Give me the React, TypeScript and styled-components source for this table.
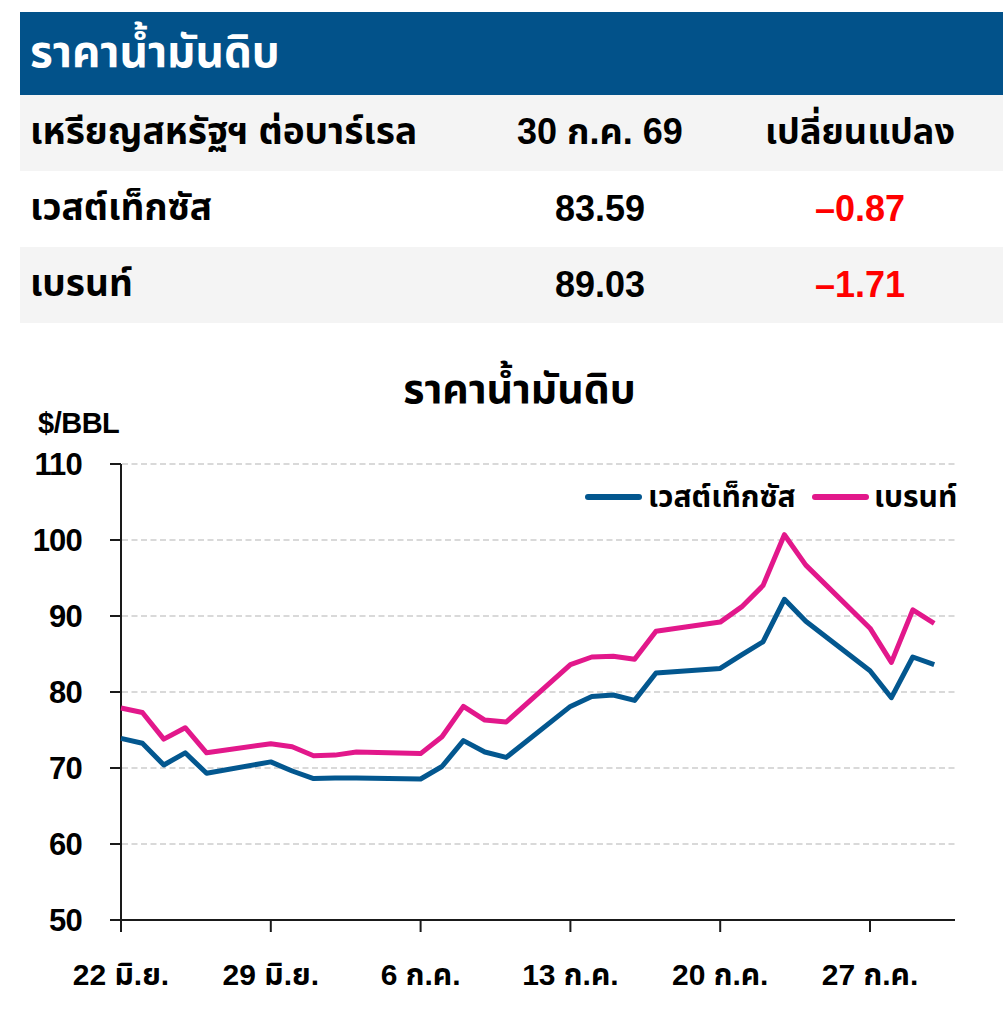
import styled, { createGlobalStyle } from "styled-components";

const GlobalStyle = createGlobalStyle`
  * { box-sizing: border-box; }
  body {
    margin: 0;
    background: #ffffff;
    font-family: "Liberation Sans", "Noto Sans Thai", "Noto Sans", sans-serif;
    color: #000000;
  }
`;

const Page = styled.main`
  width: 1003px;
  padding-top: 12px;
`;

const Table = styled.section`
  margin-left: 20px;
`;

const TitleBar = styled.h1`
  margin: 0;
  height: 83px;
  padding-left: 10px;
  display: flex;
  align-items: center;
  background: #02528a;
  color: #ffffff;
  font-size: 44px;
  font-weight: 700;
`;

const Row = styled.div<{ $shaded?: boolean }>`
  height: 76px;
  display: grid;
  grid-template-columns: 450px 260px 260px 1fr;
  align-items: center;
  background: ${(p) => (p.$shaded ? "#f4f4f4" : "#ffffff")};
  font-size: 36px;
  font-weight: 700;
`;

const Label = styled.div`
  padding-left: 10px;
  white-space: nowrap;
  font-size: 37px;
`;

const Cell = styled.div<{ $negative?: boolean }>`
  text-align: center;
  white-space: nowrap;
  color: ${(p) => (p.$negative ? "#ff0000" : "#000000")};
`;

const ChartSection = styled.section`
  margin-top: 35px;
`;

const ChartTitle = styled.h2`
  margin: 0;
  padding: 14px 0 0 36px;
  text-align: center;
  font-size: 41px;
  line-height: 34px;
  font-weight: 700;
`;

const Unit = styled.div`
  padding-left: 38px;
  font-size: 29px;
  line-height: 35px;
  font-weight: 700;
  letter-spacing: -0.5px;
`;

const Plot = styled.svg`
  display: block;
  margin-top: 4px;
  font-family: "Liberation Sans", "Noto Sans Thai", "Noto Sans", sans-serif;
  font-weight: 700;
`;

type Point = [number, number];

const wti: Point[] = [
  [0, 73.9], [1, 73.25], [2, 70.4], [3, 72.0], [4, 69.3], [7, 70.8], [8, 69.6],
  [9, 68.6], [10, 68.7], [11, 68.7], [14, 68.55], [15, 70.2], [16, 73.6], [17, 72.1],
  [18, 71.4], [21, 78.1], [22, 79.4], [23, 79.6], [24, 78.9], [25, 82.5], [28, 83.1],
  [29, 84.9], [30, 86.6], [31, 92.2], [32, 89.3], [35, 82.8], [36, 79.25], [37, 84.6],
  [38, 83.59],
];

const brent: Point[] = [
  [0, 77.9], [1, 77.3], [2, 73.8], [3, 75.3], [4, 72.0], [7, 73.2], [8, 72.8],
  [9, 71.6], [10, 71.7], [11, 72.1], [14, 71.9], [15, 74.1], [16, 78.1], [17, 76.3],
  [18, 76.05], [21, 83.6], [22, 84.6], [23, 84.7], [24, 84.3], [25, 88.0], [28, 89.2],
  [29, 91.2], [30, 94.0], [31, 100.7], [32, 96.7], [35, 88.4], [36, 83.9], [37, 90.8],
  [38, 89.03],
];

const X0 = 121;
const DAY = 149.8 / 7;
const xOf = (d: number) => X0 + d * DAY;
const yOf = (v: number) => 920 - (v - 50) * 7.6;
const toPath = (pts: Point[]) =>
  pts.map(([d, v], i) => `${i ? "L" : "M"}${xOf(d).toFixed(1)} ${yOf(v).toFixed(1)}`).join(" ");

const yTicks = [110, 100, 90, 80, 70, 60, 50];
const xTicks = ["22 มิ.ย.", "29 มิ.ย.", "6 ก.ค.", "13 ก.ค.", "20 ก.ค.", "27 ก.ค."];

const BLUE = "#03578f";
const PINK = "#e2188b";

const PriceChart = () => (
  <Plot width={1003} height={587} viewBox="0 445 1003 587">
    {yTicks.slice(0, 6).map((v) => (
      <line
        key={v}
        x1={122}
        x2={955}
        y1={yOf(v)}
        y2={yOf(v)}
        stroke="#d9d9d9"
        strokeWidth={2}
        strokeDasharray="6 3.5"
      />
    ))}
    {yTicks.map((v) => (
      <g key={`t${v}`}>
        <line x1={110} x2={121} y1={yOf(v)} y2={yOf(v)} stroke="#1a1a1a" strokeWidth={2} />
        <text x={82} y={yOf(v) + 11} textAnchor="end" fontSize={31} letterSpacing={-0.8}>
          {v}
        </text>
      </g>
    ))}
    <line x1={121} x2={121} y1={yOf(110)} y2={932} stroke="#1a1a1a" strokeWidth={2} />
    <line x1={110} x2={955} y1={920} y2={920} stroke="#1a1a1a" strokeWidth={2} />
    {xTicks.map((label, i) => (
      <g key={label}>
        <line x1={xOf(i * 7)} x2={xOf(i * 7)} y1={920} y2={932} stroke="#1a1a1a" strokeWidth={2} />
        <text x={xOf(i * 7)} y={985} textAnchor="middle" fontSize={30}>
          {label}
        </text>
      </g>
    ))}
    <path d={toPath(wti)} fill="none" stroke={BLUE} strokeWidth={5} strokeLinejoin="round" />
    <path d={toPath(brent)} fill="none" stroke={PINK} strokeWidth={5} strokeLinejoin="round" />
    <line x1={588} x2={639} y1={497} y2={497} stroke={BLUE} strokeWidth={6} strokeLinecap="round" />
    <text x={648} y={507} fontSize={30}>เวสต์เท็กซัส</text>
    <line x1={815} x2={866} y1={497} y2={497} stroke={PINK} strokeWidth={6} strokeLinecap="round" />
    <text x={874} y={507} fontSize={30}>เบรนท์</text>
  </Plot>
);

export default function App() {
  return (
    <Page>
      <GlobalStyle />
      <Table>
        <TitleBar>ราคาน้ำมันดิบ</TitleBar>
        <Row $shaded>
          <Label>เหรียญสหรัฐฯ ต่อบาร์เรล</Label>
          <Cell>30 ก.ค. 69</Cell>
          <Cell>เปลี่ยนแปลง</Cell>
        </Row>
        <Row>
          <Label>เวสต์เท็กซัส</Label>
          <Cell>83.59</Cell>
          <Cell $negative>–0.87</Cell>
        </Row>
        <Row $shaded>
          <Label>เบรนท์</Label>
          <Cell>89.03</Cell>
          <Cell $negative>–1.71</Cell>
        </Row>
      </Table>
      <ChartSection>
        <ChartTitle>ราคาน้ำมันดิบ</ChartTitle>
        <Unit>$/BBL</Unit>
        <PriceChart />
      </ChartSection>
    </Page>
  );
}
